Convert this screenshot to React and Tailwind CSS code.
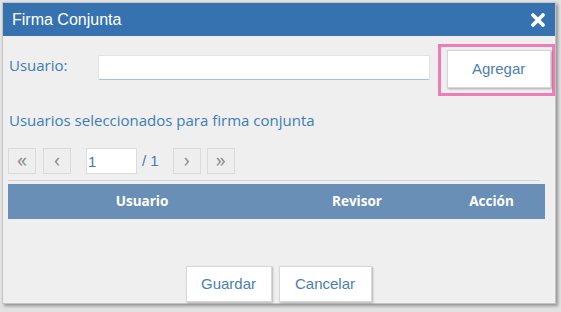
import React from "react";

const sans = { fontFamily: '"Liberation Sans", Arial, sans-serif' };

const PageButton = ({ children }) => (
  <button className="w-[28px] h-[26px] border border-[#dadada] bg-[#eeeeee] text-[#8a8a8a] text-[20px] flex items-center justify-center leading-none pb-[2px]">
    {children}
  </button>
);

const CloseIcon = () => (
  <svg width="16" height="16" viewBox="0 0 16 16">
    <path d="M3 3 L13 13 M13 3 L3 13" stroke="#fff" strokeWidth="3.8" strokeLinecap="round" />
  </svg>
);

export default function App() {
  return (
    <div className="w-[561px] h-[312px] bg-[#e2e2e2] overflow-hidden font-['Open_Sans',sans-serif]">
      <div className="ml-[2px] mt-[2px] w-[554px] h-[302px] border border-[#c4c4c4] bg-[#efefef] flex flex-col shadow-[2px_2px_3px_rgba(0,0,0,0.35)]">
        <div className="h-[33px] bg-[#3672b0] flex items-center justify-between pl-[9px] pr-[9px]">
          <span style={sans} className="text-white text-[16px]">Firma Conjunta</span>
          <CloseIcon />
        </div>

        <div className="flex-1 pl-[5px]">
          <div className="mt-[8px] flex items-start">
            <span className="mt-[10px] w-[91px] pl-[1px] text-[15px] text-[#3d7db3]">Usuario:</span>
            <input className="mt-[11px] w-[333px] h-[25px] bg-white border border-[#e2e2e2] border-b-[#9cc3e6] rounded-[2px] outline-none" />
            <div className="ml-[8px] w-[118px] h-[52px] border-[3px] border-[#f07cb5] pl-[6px] pt-[3px]">
              <button style={sans} className="w-[104px] h-[38px] bg-white border border-[#d6d6d6] shadow-[1px_1px_2px_rgba(0,0,0,0.3)] text-[15px] text-[#4a7fae]">
                Agregar
              </button>
            </div>
          </div>

          <div className="mt-[14px] pl-[1px] text-[15px] leading-[20px] text-[#3d7db3]">
            Usuarios seleccionados para firma conjunta
          </div>

          <div className="mt-[18px] flex items-center">
            <PageButton>«</PageButton>
            <div className="ml-[7px]"><PageButton>‹</PageButton></div>
            <input defaultValue="1" style={sans} className="ml-[15px] w-[51px] h-[26px] bg-white border border-[#dcdcdc] pl-[1px] text-[15px] text-[#3d7db3] outline-none" />
            <span style={sans} className="ml-[5px] text-[15px] text-[#3d7db3]">/ 1</span>
            <div className="ml-[14px]"><PageButton>›</PageButton></div>
            <div className="ml-[6px]"><PageButton>»</PageButton></div>
          </div>

          <div className="mt-[6px] w-[532px] h-px bg-[#d4d4d4]" />

          <div className="mt-[3px] w-[537px] h-[35px] bg-[#6a8fb7] grid grid-cols-[268px_162px_107px] items-center text-white font-bold text-[13.5px]">
            <span className="text-center">Usuario</span>
            <span className="text-center">Revisor</span>
            <span className="text-center">Acción</span>
          </div>

          <div className="mt-[47px] flex justify-center gap-[7px] pr-[6px]" style={sans}>
            <button className="w-[86px] h-[36px] bg-white border border-[#d8d8d8] shadow-[1px_1px_2px_rgba(0,0,0,0.25)] text-[15px] text-[#4a7fae]">
              Guardar
            </button>
            <button className="w-[93px] h-[36px] bg-white border border-[#d8d8d8] shadow-[1px_1px_2px_rgba(0,0,0,0.25)] text-[15px] text-[#4a7fae]">
              Cancelar
            </button>
          </div>
        </div>
      </div>
    </div>
  );
}
